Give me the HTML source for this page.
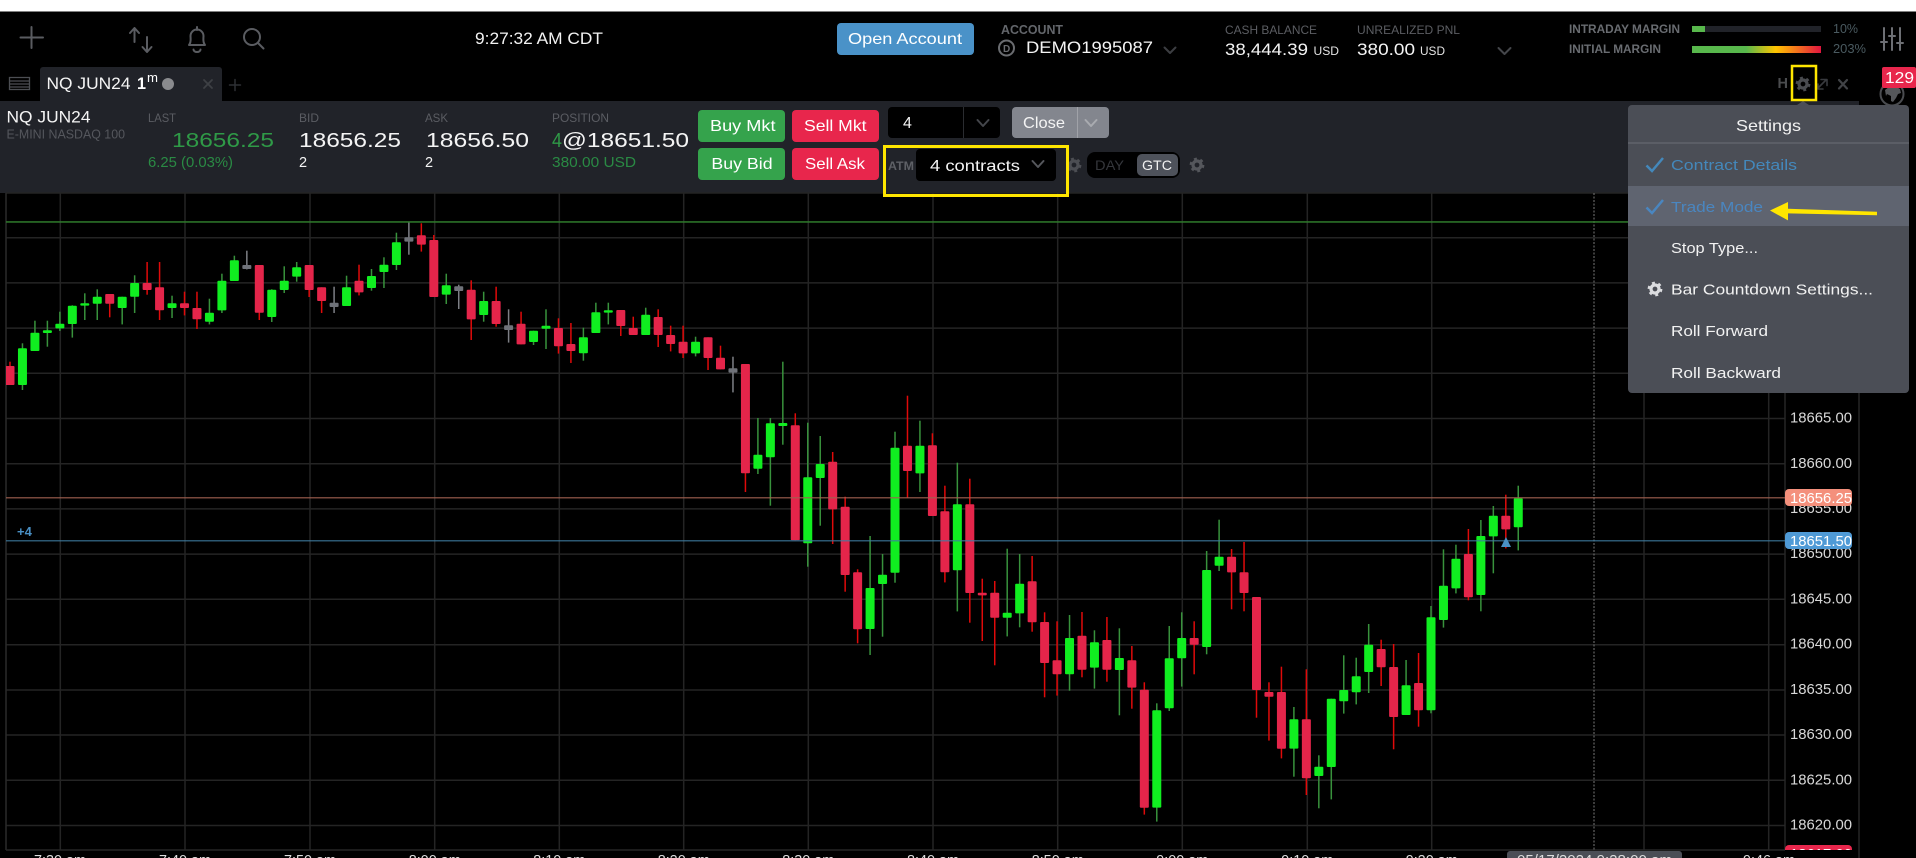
<!DOCTYPE html>
<html><head><meta charset="utf-8"><title>Chart</title>
<style>
html,body{margin:0;padding:0;background:#000;width:1916px;height:858px;overflow:hidden}
svg{display:block}
text{font-family:"Liberation Sans",sans-serif;white-space:pre}
.ic{fill:none;stroke:#5a5c61;stroke-width:2;stroke-linecap:round;stroke-linejoin:round}
</style></head><body>
<svg xmlns="http://www.w3.org/2000/svg" width="1916" height="858" viewBox="0 0 1916 858">
<defs>
<linearGradient id="mg" x1="0" x2="1" y1="0" y2="0"><stop offset="0" stop-color="#58b84c"/><stop offset=".42" stop-color="#58b84c"/><stop offset=".65" stop-color="#ffc400"/><stop offset=".82" stop-color="#f4701f"/><stop offset="1" stop-color="#e0153f"/></linearGradient>
<clipPath id="cc"><rect x="6" y="193" width="1779" height="657"/></clipPath>
<g id="gear"><circle r="4" fill="none" stroke="currentColor" stroke-width="3.2"/><circle r="6.2" fill="none" stroke="currentColor" stroke-width="2.4" stroke-dasharray="2.9 3.6"/></g>
</defs>
<rect width="1916" height="858" fill="#000"/>
<rect width="1916" height="11.5" fill="#fff"/>

<!-- top bar icons -->
<path class="ic" d="M20.5 37.5H43M31.5 27V48"/>
<path class="ic" d="M134.5 42V28M130 33l4.5-5 4.5 5M147 37V52M142.500 47l4.500 5 4.500-5"/>
<path class="ic" d="M197 27v3M189 45c2.500-3 1.500-6.500 1.500-9a6.500 6.500 0 0 1 13 0c0 2.500-1 6 1.500 9zM193.500 49.500a3.500 2.500 0 0 0 7 0"/>
<circle class="ic" cx="252" cy="37" r="8"/><path class="ic" d="M258 43l5.500 5.500"/>
<text x="475" y="44" font-size="16.5" fill="#f2f2f2" textLength="128" lengthAdjust="spacingAndGlyphs">9:27:32 AM CDT</text>

<rect x="837" y="23" width="137" height="32" rx="4" fill="#4a92c8"/>
<text x="848" y="44" font-size="16" fill="#fff" textLength="114" lengthAdjust="spacingAndGlyphs">Open Account</text>
<text x="1001" y="34" font-size="12.500" font-weight="bold" fill="#63666b" textLength="62" lengthAdjust="spacingAndGlyphs">ACCOUNT</text>
<circle cx="1006.500" cy="48" r="7.500" fill="none" stroke="#6a6c70" stroke-width="2"/>
<text x="1003" y="52" font-size="10" font-weight="bold" fill="#6a6c70">D</text>
<text x="1026" y="53" font-size="16.500" fill="#f4f4f4" textLength="127" lengthAdjust="spacingAndGlyphs">DEMO1995087</text>
<path class="ic" d="M1164.500 47.500l5.500 5.500 5.500-5.500" style="stroke:#3c3e42"/>
<text x="1225" y="34" font-size="12" fill="#5c5e63" textLength="92" lengthAdjust="spacingAndGlyphs">CASH BALANCE</text>
<text x="1225" y="55" font-size="17" fill="#f4f4f4" textLength="83" lengthAdjust="spacingAndGlyphs">38,444.39</text>
<text x="1313.500" y="55" font-size="12" fill="#e4e4e4" textLength="25.500" lengthAdjust="spacingAndGlyphs">USD</text>
<text x="1357" y="34" font-size="12" fill="#5c5e63" textLength="103" lengthAdjust="spacingAndGlyphs">UNREALIZED PNL</text>
<text x="1357" y="55" font-size="17" fill="#f4f4f4" textLength="58" lengthAdjust="spacingAndGlyphs">380.00</text>
<text x="1420" y="55" font-size="12" fill="#e4e4e4" textLength="25" lengthAdjust="spacingAndGlyphs">USD</text>
<path style="stroke:#44464a" class="ic" d="M1498.500 48l6 6 6-6"/>
<text x="1569" y="33" font-size="12" font-weight="bold" fill="#696c71" textLength="111" lengthAdjust="spacingAndGlyphs">INTRADAY MARGIN</text>
<text x="1569" y="53" font-size="12" font-weight="bold" fill="#696c71" textLength="92" lengthAdjust="spacingAndGlyphs">INITIAL MARGIN</text>
<rect x="1692" y="26" width="129" height="6" fill="#212329"/>
<rect x="1692" y="26" width="13" height="6" fill="#58b84c"/>
<rect x="1692" y="46" width="129" height="7" fill="url(#mg)"/>
<text x="1833" y="33" font-size="12.500" fill="#4a5a60" textLength="25" lengthAdjust="spacingAndGlyphs">10%</text>
<text x="1833" y="53" font-size="12.500" fill="#4a5a60" textLength="33" lengthAdjust="spacingAndGlyphs">203%</text>
<path class="ic" style="stroke:#6d6f74" d="M1884 28v22M1892 28v22M1900 28v22M1881 42h6M1889 36h6M1897 43h6"/>

<!-- tab row -->
<path fill="none" stroke="#4c4e53" stroke-width="1.300" d="M9.500 77.500h20v12h-20zM10 81h19M10 84h19M10 87h19"/>
<path d="M40 101V70a3 3 0 0 1 3-3h176a3 3 0 0 1 3 3v31z" fill="#212329"/>
<text x="46.500" y="89" font-size="16.500" fill="#f4f4f4" textLength="84" lengthAdjust="spacingAndGlyphs">NQ JUN24</text>
<text x="137" y="89" font-size="17" font-weight="bold" fill="#fff" textLength="9" lengthAdjust="spacingAndGlyphs">1</text>
<text x="147" y="82" font-size="13" fill="#fff" textLength="11" lengthAdjust="spacingAndGlyphs">m</text>
<circle cx="168" cy="84" r="6" fill="#8a8b8e"/>
<path style="stroke:#3e4045;stroke-width:1.800" class="ic" d="M204 80l8 8M212 80l-8 8"/>
<path style="stroke:#2e3034;stroke-width:1.500" class="ic" d="M229.500 85h11M235 79.500v11"/>
<text x="1777.500" y="88" font-size="14.500" font-weight="bold" fill="#4a4c4e">H</text>
<use href="#gear" x="1803" y="84" color="#4a4c50"/>
<path style="stroke:#383a3e;stroke-width:1.600" class="ic" d="M1818 88l8-8M1821 79.500h6v6M1818 84v5h5"/>
<path style="stroke:#414347;stroke-width:2.200" class="ic" d="M1839 80l8 8.500M1847 80l-8 8.500"/>

<!-- panel -->
<rect x="0" y="101" width="1859" height="92" fill="#212329"/>
<text x="6.500" y="122.500" font-size="16.500" fill="#f4f4f4" textLength="84" lengthAdjust="spacingAndGlyphs">NQ JUN24</text>
<text x="6.500" y="138.500" font-size="12.500" fill="#55575d" textLength="118.500" lengthAdjust="spacingAndGlyphs">E-MINI NASDAQ 100</text>
<text x="148" y="122" font-size="12" fill="#5b5d63" textLength="28" lengthAdjust="spacingAndGlyphs">LAST</text>
<text x="172" y="147" font-size="20.500" fill="#2f9a47" textLength="102" lengthAdjust="spacingAndGlyphs">18656.25</text>
<text x="148" y="167" font-size="14.500" fill="#2a8a44" textLength="85" lengthAdjust="spacingAndGlyphs">6.25 (0.03%)</text>
<text x="299" y="122" font-size="12" fill="#5b5d63" textLength="20" lengthAdjust="spacingAndGlyphs">BID</text>
<text x="299" y="147" font-size="20.500" fill="#f4f4f4" textLength="102" lengthAdjust="spacingAndGlyphs">18656.25</text>
<text x="299" y="167" font-size="14.500" fill="#f4f4f4">2</text>
<text x="425" y="122" font-size="12" fill="#5b5d63" textLength="23" lengthAdjust="spacingAndGlyphs">ASK</text>
<text x="426" y="147" font-size="20.500" fill="#f4f4f4" textLength="103" lengthAdjust="spacingAndGlyphs">18656.50</text>
<text x="425" y="167" font-size="14.500" fill="#f4f4f4">2</text>
<text x="552" y="122" font-size="12" fill="#5b5d63" textLength="57" lengthAdjust="spacingAndGlyphs">POSITION</text>
<text x="552" y="147" font-size="20.500" fill="#2f9a47" textLength="10" lengthAdjust="spacingAndGlyphs">4</text>
<text x="562" y="147" font-size="20.500" fill="#f4f4f4" textLength="127" lengthAdjust="spacingAndGlyphs">@18651.50</text>
<text x="552" y="167" font-size="14.500" fill="#2a8a44" textLength="84" lengthAdjust="spacingAndGlyphs">380.00 USD</text>

<rect x="698" y="110" width="87" height="32" rx="4" fill="#35a34c"/>
<rect x="792" y="110" width="87" height="32" rx="4" fill="#e8264c"/>
<rect x="698" y="148" width="87" height="32" rx="4" fill="#35a34c"/>
<rect x="792" y="148" width="87" height="32" rx="4" fill="#e8264c"/>
<text x="710" y="131" font-size="16" fill="#fff" textLength="65.500" lengthAdjust="spacingAndGlyphs">Buy Mkt</text>
<text x="804" y="131" font-size="16" fill="#fff" textLength="62.500" lengthAdjust="spacingAndGlyphs">Sell Mkt</text>
<text x="711.400" y="169" font-size="16" fill="#fff" textLength="61.200" lengthAdjust="spacingAndGlyphs">Buy Bid</text>
<text x="805" y="169" font-size="16" fill="#fff" textLength="60" lengthAdjust="spacingAndGlyphs">Sell Ask</text>

<rect x="888" y="107" width="112" height="31" rx="4" fill="#000"/>
<rect x="963" y="107" width="1" height="31" fill="#2a2c30"/>
<text x="903" y="128" font-size="16" fill="#f4f4f4">4</text>
<path style="stroke:#44464b" class="ic" d="M977.500 120l5.500 6 5.500-6"/>
<rect x="1012" y="107" width="97" height="31" rx="4" fill="#83868e"/>
<rect x="1077" y="107" width="1" height="31" fill="#a0a2a8"/>
<text x="1023" y="128" font-size="16" fill="#f4f4f4" textLength="42" lengthAdjust="spacingAndGlyphs">Close</text>
<path style="stroke:#a9abb0" class="ic" d="M1085.500 120l5.500 6 5.500-6"/>

<text x="888" y="170" font-size="12" font-weight="bold" fill="#5e6066" textLength="26" lengthAdjust="spacingAndGlyphs">ATM</text>
<rect x="916" y="149" width="140" height="32" rx="4" fill="#000"/>
<text x="930" y="171" font-size="16" fill="#f4f4f4" textLength="90" lengthAdjust="spacingAndGlyphs">4 contracts</text>
<path style="stroke:#55575c" class="ic" d="M1032.500 161l5.500 6 5.500-6"/>
<use href="#gear" x="1074" y="165" color="#4c4e53"/>
<rect x="1087" y="152" width="93" height="26" rx="8" fill="#000"/>
<text x="1095" y="170" font-size="14" fill="#34363b" textLength="29" lengthAdjust="spacingAndGlyphs">DAY</text>
<rect x="1137" y="154" width="41" height="22" rx="5" fill="#4e525b"/>
<text x="1142" y="170" font-size="14" fill="#f0f0f0" textLength="30" lengthAdjust="spacingAndGlyphs">GTC</text>
<use href="#gear" x="1197" y="165" color="#55575c"/>

<!-- chart -->
<g id="grid" stroke="#242424" stroke-width="1.500" fill="none">
<path d="M60.300 193V850M185 193V850M310 193V850M434.700 193V850M559.300 193V850M683.700 193V850M808.300 193V850M933 193V850M1057.700 193V850M1182.300 193V850M1307.300 193V850M1431.700 193V850M1644 193V850M1768.700 193V850"/>
<path d="M6 193H1785M6 237.700H1785M6 282.900H1785M6 328.100H1785M6 373.300H1785M6 418.500H1785M6 463.700H1785M6 508.900H1785M6 554.100H1785M6 599.300H1785M6 644.700H1785M6 690H1785M6 735H1785M6 780.300H1785M6 825.500H1785"/>
<path d="M6 193V850" stroke="#2a2a2a"/>
<path d="M1785 193V850M1859 193V858M6 850H1785" stroke="#262626"/>
</g>
<path d="M1594 193V850" stroke="#777" stroke-width="1" stroke-dasharray="2 1.500"/>
<g id="candles" clip-path="url(#cc)"></g>
<rect x="6" y="221.200" width="1779" height="1.500" fill="#2f7a2c"/>
<rect x="6" y="497" width="1779" height="1.500" fill="#a06050" opacity=".75"/>
<rect x="6" y="540" width="1779" height="1.500" fill="#3f7ea3" opacity=".7"/>
<text x="17" y="536" font-size="13" font-weight="bold" fill="#4a90c4">+4</text>
<path d="M1506 537l5 10h-10z" fill="#4a90c4"/>

<g font-size="15" fill="#d8d8d8">
<text x="1790" y="422.700" textLength="62" lengthAdjust="spacingAndGlyphs">18665.00</text>
<text x="1790" y="467.900" textLength="62" lengthAdjust="spacingAndGlyphs">18660.00</text>
<text x="1790" y="513" textLength="62" lengthAdjust="spacingAndGlyphs">18655.00</text>
<text x="1790" y="558" textLength="62" lengthAdjust="spacingAndGlyphs">18650.00</text>
<text x="1790" y="603.300" textLength="62" lengthAdjust="spacingAndGlyphs">18645.00</text>
<text x="1790" y="648.700" textLength="62" lengthAdjust="spacingAndGlyphs">18640.00</text>
<text x="1790" y="694" textLength="62" lengthAdjust="spacingAndGlyphs">18635.00</text>
<text x="1790" y="739" textLength="62" lengthAdjust="spacingAndGlyphs">18630.00</text>
<text x="1790" y="784.300" textLength="62" lengthAdjust="spacingAndGlyphs">18625.00</text>
<text x="1790" y="829.500" textLength="62" lengthAdjust="spacingAndGlyphs">18620.00</text>
</g>
<rect x="1785" y="489" width="67" height="17" rx="4" fill="#f4907c"/>
<text x="1790" y="503" font-size="15" fill="#fff" textLength="62" lengthAdjust="spacingAndGlyphs">18656.25</text>
<rect x="1785" y="532" width="67" height="17" rx="4" fill="#4f9ad6"/>
<text x="1790" y="546" font-size="15" fill="#fff" textLength="62" lengthAdjust="spacingAndGlyphs">18651.50</text>
<svg x="1785" y="845" width="67" height="5"><rect width="67" height="17" rx="4" fill="#e8264c"/><text x="5" y="14" font-size="15" fill="#fff" textLength="62" lengthAdjust="spacingAndGlyphs">18617.00</text></svg>

<g font-size="14.500" fill="#ddd">
<text x="34" y="865" textLength="52" lengthAdjust="spacingAndGlyphs">7:30 am</text>
<text x="159" y="865" textLength="52" lengthAdjust="spacingAndGlyphs">7:40 am</text>
<text x="284" y="865" textLength="52" lengthAdjust="spacingAndGlyphs">7:50 am</text>
<text x="408.700" y="865" textLength="52" lengthAdjust="spacingAndGlyphs">8:00 am</text>
<text x="533.300" y="865" textLength="52" lengthAdjust="spacingAndGlyphs">8:10 am</text>
<text x="657.700" y="865" textLength="52" lengthAdjust="spacingAndGlyphs">8:20 am</text>
<text x="782.300" y="865" textLength="52" lengthAdjust="spacingAndGlyphs">8:30 am</text>
<text x="907" y="865" textLength="52" lengthAdjust="spacingAndGlyphs">8:40 am</text>
<text x="1031.700" y="865" textLength="52" lengthAdjust="spacingAndGlyphs">8:50 am</text>
<text x="1156.300" y="865" textLength="52" lengthAdjust="spacingAndGlyphs">9:00 am</text>
<text x="1281.300" y="865" textLength="52" lengthAdjust="spacingAndGlyphs">9:10 am</text>
<text x="1405.700" y="865" textLength="52" lengthAdjust="spacingAndGlyphs">9:20 am</text>
<text x="1743" y="865" textLength="52" lengthAdjust="spacingAndGlyphs">9:46 am</text>
</g>
<rect x="1507" y="851" width="175" height="14" rx="3" fill="#4b4e56"/>
<text x="1517" y="865" font-size="14.500" fill="#ddd" textLength="155" lengthAdjust="spacingAndGlyphs">05/17/2024 9:28:00 am</text>

<!-- globe + badge -->
<circle cx="1892" cy="94" r="11.500" fill="#000" stroke="#4a4c50" stroke-width="2"/>
<path d="M1885 90l4-3 6-1 5 3 1 4-3 1-2 4-3 4-2-1v-5l-4-2-1 2z" fill="#55575b"/>
<rect x="1882" y="67" width="34" height="21" rx="2" fill="#e8264c"/>
<text x="1885" y="83" font-size="16" fill="#fff" textLength="29" lengthAdjust="spacingAndGlyphs">129</text>

<!-- menu -->
<path d="M1797 105l6-4 6 4z" fill="#4b4e56"/>
<rect x="1628" y="105" width="281" height="288" rx="4" fill="#4b4e56"/>
<rect x="1628" y="142.500" width="281" height="1" fill="#6b6e76"/>
<rect x="1628" y="186" width="281" height="40" fill="#5f6470"/>
<g font-size="15" fill="#f2f2f2">
<text x="1736" y="131" font-size="16" textLength="65" lengthAdjust="spacingAndGlyphs">Settings</text>
<text x="1671" y="170" fill="#4488bb" textLength="126" lengthAdjust="spacingAndGlyphs">Contract Details</text>
<text x="1671" y="212" fill="#4a86c0" textLength="92" lengthAdjust="spacingAndGlyphs">Trade Mode</text>
<text x="1671" y="253" textLength="87" lengthAdjust="spacingAndGlyphs">Stop Type...</text>
<text x="1671" y="294.500" textLength="202" lengthAdjust="spacingAndGlyphs">Bar Countdown Settings...</text>
<text x="1671" y="336" textLength="97" lengthAdjust="spacingAndGlyphs">Roll Forward</text>
<text x="1671" y="378" textLength="110" lengthAdjust="spacingAndGlyphs">Roll Backward</text>
</g>
<path d="M1646.500 165.500l5.500 5.500 11-13" fill="none" stroke="#4488bb" stroke-width="2.500"/>
<path d="M1646.500 207.500l5.500 5.500 11-13" fill="none" stroke="#4a86c0" stroke-width="2.500"/>
<use href="#gear" x="1655" y="289" color="#dcdde0"/>

<!-- yellow annotations -->
<rect x="884.500" y="146.500" width="183" height="49" fill="none" stroke="#ffe600" stroke-width="3"/>
<rect x="1792" y="66" width="24" height="34" fill="none" stroke="#ffe600" stroke-width="2.500"/>
<path d="M1770 210.500l18-8.500v6.800l89 3v3.400l-89-1.800v7z" fill="#ffe600"/>
</svg>
<script>
var A=[['r',485,498,555,555],['g',430,445,555,570],['g',362,398,453,453],['g',362,391,399,440],['g',335,371,385,393],['g',316,317,372,413],['g',280,310,317,360],['g',268,290,311,360],['r',282,282,311,352],['g',290,290,324,373],['g',226,249,290,339],['r',186,249,270,284],['r',186,262,331,360],['g',287,310,324,354],['r',275,310,324,346],['r',275,324,358,387],['g',296,338,365,373],['g',221,242,331,339],['g',167,181,243,243],['n',152,195,207,208],['r',195,195,338,360],['g',268,269,351,366],['g',199,242,270,279],['g',186,202,230,245],['r',195,195,270,291],['r',262,262,303,339],['n',260,308,321,339],['g',227,262,318,318],['r',194,242,277,286],['g',207,228,264,272],['g',172,194,216,264],['g',98,127,195,210],['n',66,112,125,164],['r',70,106,134,155],['r',105,120,291,291],['g',221,256,284,312],['n',254,259,273,327],['r',241,269,358,420]];
var B=[['g',35,63,105,125],['r',20,63,132,140],['n',88,136,150,188],['r',95,131,193,193],['g',152,152,186,195],['g',88,137,146,207],['r',115,144,199,221],['r',129,192,213,249],['g',143,172,220,242],['g',68,97,159,159],['g',68,91,98,133],['r',90,90,138,168],['r',110,144,165,165],['g',83,104,165,165],['r',88,111,165,201],['r',137,165,192,214],['r',137,185,220,234],['g',170,185,220,229],['r',172,172,234,270],['r',197,233,268,268],['n',230,265,278,337],['r',252,252,580,636],['g',414,524,566,582],['g',414,430,532,677],['g',245,429,438,494],['r',400,436,781,781],['g',428,592,790,860],['g',468,552,594,737],['r',516,545,688,792],['r',650,680,885,935],['r',868,877,1048,1090],['g',768,924,1047,1125],['g',822,884,912,1070],['g',455,503,878,908],['r',347,497,573,654],['g',422,497,580,636]];
var C=[['r',-140,-104,108,108],['r',17,94,277,307],['g',-52,73,271,394],['r',-4,73,339,428],['r',296,338,346,483],['r',303,338,413,556],['g',206,398,413,469],['g',222,311,400,442],['r',228,304,427,455],['r',397,426,549,652],['r',424,541,583,647],['g',405,474,583,632],['r',396,467,569,592],['g',451,487,563,626],['r',411,480,569,605],['g',445,534,570,706],['r',498,541,623,686],['r',607,629,983,1004],['g',670,691,983,1025],['g',438,535,685,693],['g',397,474,535,620],['r',424,474,494,583]];
var D=[['g',243,300,531,553],['g',149,260,287,303],['r',237,260,307,418],['r',216,307,369,424],['r',381,381,660,743],['r',637,666,680,812],['r',590,666,836,865],['g',711,748,836,920],['r',598,748,925,975],['g',856,890,918,1015],['g',686,686,891,988],['g',556,660,694,731],['g',563,619,667,703],['g',462,524,606,669],['r',509,537,592,648],['r',522,591,741,838],['g',570,646,735,735],['r',549,639,721,770],['g',408,442,721,730],['g',238,347,450,473],['g',224,266,355,370],['r',177,252,382,391],['g',150,198,375,424],['g',108,137,199,310],['r',74,137,178,235],['g',47,85,172,241]];
var col={g:['#38923c','#10ee20'],r:['#e00a0a','#e4254a'],n:['#7d7f85','#6f7279']};
var h='',i=0;
[[200,A],[280,B],[480,C],[470,D]].forEach(function(g){g[1].forEach(function(c){
var x=10+12.465*i,o=g[0],k=col[c[0]],t=o+c[1]/3,bt=o+c[2]/3,bb=o+c[3]/3,w=o+c[4]/3;
h+='<rect x="'+(x-.75).toFixed(2)+'" y="'+t.toFixed(1)+'" width="1.5" height="'+(w-t).toFixed(1)+'" fill="'+k[0]+'"/>';
h+='<rect x="'+(x-4.5).toFixed(2)+'" y="'+bt.toFixed(1)+'" width="9" height="'+Math.max(bb-bt,2).toFixed(1)+'" rx="1" fill="'+k[1]+'"/>';
i++;});});
document.getElementById('candles').innerHTML=h;
</script>
</body></html>
